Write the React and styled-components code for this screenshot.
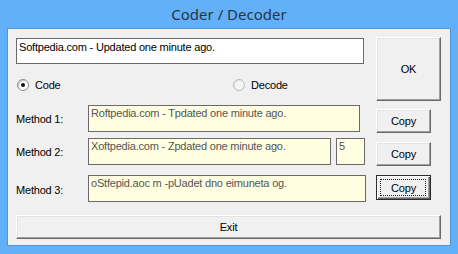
import React from "react";
import styled, { createGlobalStyle } from "styled-components";

const GlobalStyle = createGlobalStyle`
  html, body {
    margin: 0;
    padding: 0;
    background: #62b0f8;
  }
  * {
    box-sizing: border-box;
  }
`;

const Frame = styled.div`
  width: 458px;
  height: 254px;
  background: #62b0f8;
  display: flex;
  flex-direction: column;
  padding: 0 7px 8px 7px;
  font-family: "Liberation Sans", Arial, sans-serif;
`;

const TitleBar = styled.div`
  height: 30px;
  display: flex;
  align-items: center;
  justify-content: center;
  font-family: "Noto Sans", "Open Sans", sans-serif;
  font-size: 15px;
  color: #2b3440;
  padding-bottom: 1px;
`;

const Client = styled.div`
  flex: 1;
  background: #f0f0f0;
  border: 1px solid #4f97dc;
  padding: 8px 9px 6px 8px;
  display: flex;
  flex-direction: column;
  font-size: 11px;
  letter-spacing: -0.2px;
  color: #000;
`;

const Top = styled.div`
  display: flex;
  justify-content: space-between;
  height: 64px;
`;

const TopLeft = styled.div`
  display: flex;
  flex-direction: column;
  padding-top: 1px;
`;

const MainInput = styled.div`
  width: 348px;
  height: 26px;
  background: #fff;
  border: 1px solid #6b6b6b;
  padding: 2px 0 0 2px;
  line-height: 13px;
`;

const RadioRow = styled.div`
  display: flex;
  margin-top: 14px;
  padding-left: 1px;
`;

const RadioItem = styled.label`
  display: flex;
  align-items: center;
  gap: 6px;
  width: ${p => p.$w}px;
  height: 14px;
`;

const RadioCircle = styled.span`
  width: 12px;
  height: 12px;
  border-radius: 50%;
  border: 1px solid ${p => (p.$dim ? "#b9b9b9" : "#8a8a8a")};
  background: ${p => (p.$dim ? "#f4f4f4" : "#fff")};
  box-shadow: inset 1px 1px 1px ${p => (p.$dim ? "#e6e6e6" : "#c8c8c8")};
  display: flex;
  align-items: center;
  justify-content: center;

  &::after {
    content: "";
    display: ${p => (p.$checked ? "block" : "none")};
    width: 4px;
    height: 4px;
    border-radius: 50%;
    background: #111;
  }
`;

const Button = styled.div`
  width: ${p => p.$w}px;
  height: ${p => p.$h}px;
  background: #f0f0f0;
  border: 1px solid;
  border-color: #ffffff #696969 #696969 #ffffff;
  box-shadow: inset -1px -1px 0 #a0a0a0, inset 1px 1px 0 #e3e3e3;
  display: flex;
  align-items: center;
  justify-content: center;
  font-size: 11px;
  color: #000;
  margin-top: ${p => p.$mt || 0}px;
`;

const DefaultButton = styled(Button)`
  border: 1px solid #2b2b2b;
  box-shadow: inset 1px 1px 0 #fff, inset -1px -1px 0 #696969,
    inset -2px -2px 0 #a0a0a0;
  position: relative;

  &::before {
    content: "";
    position: absolute;
    inset: 3px 4px 3px 3px;
    border: 1px dotted #222;
  }
`;

const MethodRow = styled.div`
  display: flex;
  align-items: flex-start;
  margin-top: ${p => p.$mt}px;
`;

const Label = styled.div`
  width: 72px;
  align-self: center;
  padding-top: ${p => p.$pt || 0}px;
`;

const Fields = styled.div`
  width: 288px;
  display: flex;
  gap: 5px;
`;

const Yellow = styled.div`
  width: ${p => p.$w}px;
  height: 27px;
  background: #fffee1;
  border: 1px solid #6b6b6b;
  padding: 1px 0 0 2px;
  line-height: 13px;
  color: #555;
  white-space: nowrap;
  overflow: hidden;
`;

const ExitButton = styled(Button)`
  width: 425px;
  margin-top: 13px;
`;

export default function App() {
  return (
    <>
      <GlobalStyle />
      <Frame>
        <TitleBar>Coder / Decoder</TitleBar>
        <Client>
          <Top>
            <TopLeft>
              <MainInput>Softpedia.com - Updated one minute ago.</MainInput>
              <RadioRow>
                <RadioItem $w={216}>
                  <RadioCircle $checked />
                  Code
                </RadioItem>
                <RadioItem $w={100}>
                  <RadioCircle $dim />
                  Decode
                </RadioItem>
              </RadioRow>
            </TopLeft>
            <Button $w={65} $h={64}>OK</Button>
          </Top>

          <MethodRow $mt={4}>
            <Label>Method 1:</Label>
            <Fields>
              <Yellow $w={272}>Roftpedia.com - Tpdated one minute ago.</Yellow>
            </Fields>
            <Button $w={55} $h={24} $mt={4}>Copy</Button>
          </MethodRow>

          <MethodRow $mt={5}>
            <Label>Method 2:</Label>
            <Fields>
              <Yellow $w={243}>Xoftpedia.com - Zpdated one minute ago.</Yellow>
              <Yellow $w={29}>5</Yellow>
            </Fields>
            <Button $w={55} $h={24} $mt={4}>Copy</Button>
          </MethodRow>

          <MethodRow $mt={9}>
            <Label $pt={3}>Method 3:</Label>
            <Fields>
              <Yellow $w={278}>oStfepid.aoc m -pUadet dno eimuneta og.</Yellow>
            </Fields>
            <DefaultButton $w={55} $h={25}>Copy</DefaultButton>
          </MethodRow>

          <ExitButton $h={24}>Exit</ExitButton>
        </Client>
      </Frame>
    </>
  );
}
